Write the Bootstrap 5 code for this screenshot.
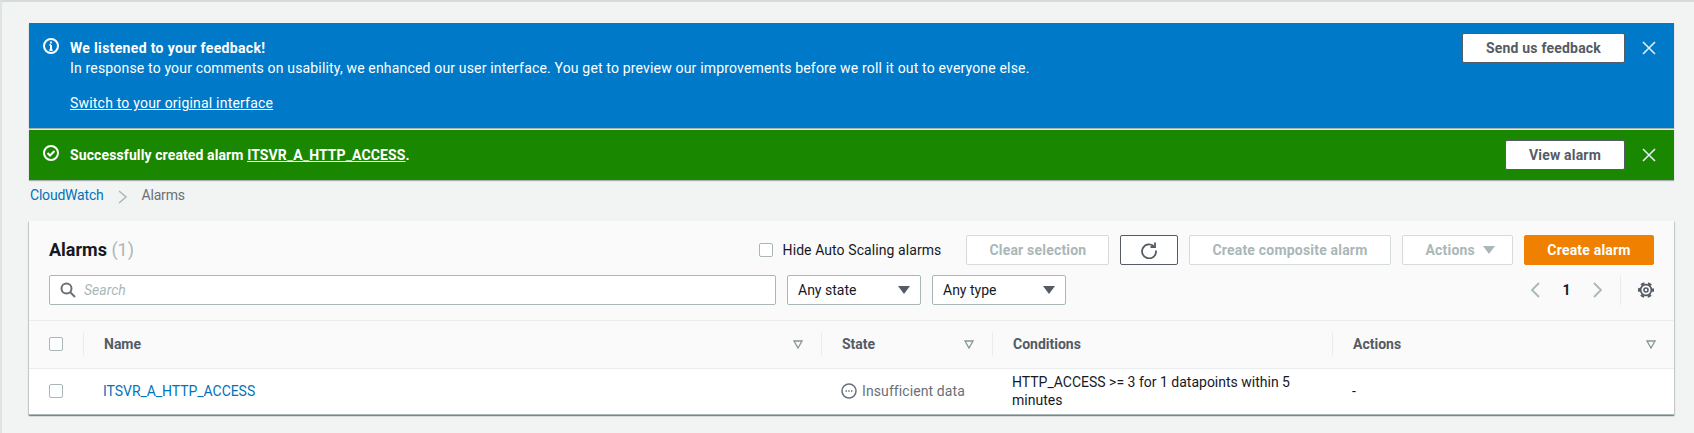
<!DOCTYPE html>
<html lang="en">
<head>
  <meta charset="UTF-8" />
  <title>CloudWatch Alarms</title>
  <link rel="stylesheet" href="https://cdn.jsdelivr.net/npm/bootstrap@5.3.0/dist/css/bootstrap.min.css" />
  <style>
    html, body { height: 100%; }
    body {
      background: #f2f3f3;
      border-top: 2px solid #d5dbdb;
      border-left: 2px solid #dfe3e3;
      font-family: Roboto, "Liberation Sans", sans-serif;
      font-size: 14px;
      line-height: 20px;
      color: #16191f;
      overflow: hidden;
    }
    .page-wrap { padding: 21px 20px 0 27px; }
    .flash-box { color: #fff; box-shadow: 0 1px 1px rgba(0, 28, 36, .3); display: flex; }
    .flash-info { background: #0079c8; height: 105px; margin-bottom: 2px; padding: 10px 18px 0 14px; }
    .flash-ok { background: #1a8700; height: 50px; padding: 10px 18px 0 14px; }
    .flash-box svg.status { flex: none; margin: 5px 11px 0 0; }
    .flash-text { flex: 1; padding-top: 5px; }
    .flash-text a { color: #fff; }
    .flash-text strong { letter-spacing: .33px; }
    .flash-text p { margin: 0 0 15px; letter-spacing: .17px; }
    .flash-link { letter-spacing: .2px; }
    .flash-ok .flash-text { letter-spacing: .11px; }
    .flash-btn {
      background: #fff;
      color: #545b64;
      border: 1px solid #545b64;
      border-radius: 2px;
      font-weight: 700;
      height: 30px;
      padding: 0 23px;
      line-height: 27px;
      letter-spacing: .2px;
    }
    .flash-close { margin: 7px 0 0 17px; flex: none; background: none; border: 0; padding: 0; line-height: 0; height: 16px; }
    .crumbs { height: 41px; padding-top: 5px; color: #687078; letter-spacing: -.2px; }
    .crumbs a { color: #0073bb; text-decoration: none; margin-left: 1px; }
    .crumbs svg { margin: 0 14px; }
    .alarm-card { box-shadow: 0 1px 1px 0 rgba(0, 28, 36, .3), 1px 1px 1px 0 rgba(0, 28, 36, .15), -1px 1px 1px 0 rgba(0, 28, 36, .15); background: #fff; }
    .alarm-head { background: #fafafa; height: 100px; padding: 14px 20px 0; border-bottom: 1px solid #eaeded; }
    .alarm-title { font-size: 18px; font-weight: 700; line-height: 30px; }
    .alarm-title span { color: #aab7b8; font-weight: 400; }
    .fake-check { width: 14px; height: 14px; border: 1px solid #aab7b8; border-radius: 2px; background: #fff; display: inline-block; flex: none; }
    .hide-label { margin: 0 25px 0 10px; letter-spacing: .08px; }
    .tool-gap { gap: 11px; }
    .aws-btn {
      height: 30px;
      border: 1px solid #d5dbdb;
      border-radius: 2px;
      background: #fff;
      color: #aab7b8;
      font-weight: 700;
      padding: 0 22px;
      line-height: 27px;
      letter-spacing: .2px;
    }
    .aws-refresh { border-color: #545b64; width: 58px; padding: 0; line-height: 0; }
    .aws-actions { padding: 0 17px 0 23px; }
    .aws-primary { background: #f08000; border-color: #f08000; color: #fff; width: 130px; padding: 0; }
    .tri { width: 0; height: 0; border-left: 6px solid transparent; border-right: 6px solid transparent; border-top: 8px solid #aab7b8; display: inline-block; }
    .search-row { margin-top: 10px; }
    .search-box { width: 727px; height: 30px; border: 1px solid #aab7b8; border-radius: 2px; background: #fff; padding: 0 10px; color: #aab7b8; font-style: italic; }
    .pick-box { width: 134px; height: 30px; border: 1px solid #aab7b8; border-radius: 2px; background: #fff; padding: 0 10px; }
    .pick-box .tri { border-top-color: #545b64; }
    .pager-num { font-weight: 700; width: 51px; text-align: center; }
    .pager-sep { border-left: 1px solid #eaeded; height: 30px; margin: 0 17px 0 16px; }
    .alarm-table { table-layout: fixed; margin: 0; }
    .alarm-table th { background: #fafafa; height: 47px; padding: 0; color: #545b64; font-weight: 700; vertical-align: middle; border-bottom: 1px solid #eaeded; }
    .alarm-table td { height: 46px; padding: 0; vertical-align: middle; border-bottom: 1px solid #aab7b8; box-shadow: none; color: #16191f; }
    .cell-head { display: flex; align-items: center; justify-content: space-between; height: 24px; border-left: 1px solid #eaeded; padding: 0 18px 0 20px; }
    .cell-first { padding-left: 20px; }
    .filter-tri { flex: none; }
    .alarm-link { color: #0073bb; text-decoration: none; padding-left: 20px; letter-spacing: -.05px; }
    .state-grey { color: #687078; padding-left: 20px; display: flex; align-items: center; gap: 5px; letter-spacing: .1px; }
    .cond-text { padding-left: 20px; padding-right: 10px; line-height: 18px; }
    .dash-cell { padding-left: 20px; }
  </style>
</head>
<body>
  <div class="page-wrap">
    <div class="flash-box flash-info">
      <svg class="status" width="16" height="16" viewBox="0 0 16 16" fill="none" stroke="#fff" stroke-width="2"><circle cx="8" cy="8" r="7"/><path d="M8 7v5M6.500 12h3M6.500 7H8"/><path d="M8 3.600v2" stroke-width="1.800"/></svg>
      <div class="flash-text">
        <strong>We listened to your feedback!</strong>
        <p>In response to your comments on usability, we enhanced our user interface. You get to preview our improvements before we roll it out to everyone else.</p>
        <a class="flash-link" href="#">Switch to your original interface</a>
      </div>
      <button class="flash-btn">Send us feedback</button>
      <button class="flash-close"><svg width="14" height="14" viewBox="0 0 14 14" stroke="#e4eef3" stroke-width="1.600"><path d="M1 1l12 12M13 1L1 13"/></svg></button>
    </div>
    <div class="flash-box flash-ok">
      <svg class="status" width="16" height="16" viewBox="0 0 16 16" fill="none" stroke="#fff" stroke-width="2"><circle cx="8" cy="8" r="7"/><path d="M4.500 8l2.500 2.500 4.500-4.500"/></svg>
      <div class="flash-text fw-bold">Successfully created alarm <a href="#">ITSVR_A_HTTP_ACCESS</a>.</div>
      <button class="flash-btn">View alarm</button>
      <button class="flash-close"><svg width="14" height="14" viewBox="0 0 14 14" stroke="#e4eef3" stroke-width="1.600"><path d="M1 1l12 12M13 1L1 13"/></svg></button>
    </div>

    <div class="crumbs d-flex align-items-start">
      <a href="#">CloudWatch</a>
      <svg width="10" height="16" viewBox="0 0 10 16" fill="none" stroke="#aab7b8" stroke-width="1.500" class="mt-1"><path d="M1 2l7 6-7 6"/></svg>
      <span>Alarms</span>
    </div>

    <div class="alarm-card">
      <div class="alarm-head">
        <div class="d-flex align-items-center tool-gap">
          <div class="alarm-title flex-grow-1">Alarms <span>(1)</span></div>
          <div class="d-flex align-items-center">
            <span class="fake-check"></span>
            <span class="hide-label">Hide Auto Scaling alarms</span>
            <button class="aws-btn">Clear selection</button>
          </div>
          <button class="aws-btn aws-refresh"><svg width="18" height="18" viewBox="0 0 18 18" fill="none" stroke="#545b64" stroke-width="1.800"><path d="M14.500 6A7 7 0 1 0 16 9.500"/><path d="M15 1.500V6h-4.500"/></svg></button>
          <button class="aws-btn">Create composite alarm</button>
          <button class="aws-btn aws-actions d-flex align-items-center gap-2">Actions <span class="tri"></span></button>
          <button class="aws-btn aws-primary">Create alarm</button>
        </div>
        <div class="d-flex align-items-center search-row tool-gap">
          <div class="search-box d-flex align-items-center gap-2">
            <svg width="16" height="16" viewBox="0 0 16 16" fill="none" stroke="#687078" stroke-width="2"><circle cx="6.500" cy="6.500" r="5"/><path d="M10 10l5 5"/></svg>
            <span>Search</span>
          </div>
          <div class="pick-box d-flex align-items-center justify-content-between"><span>Any state</span><span class="tri"></span></div>
          <div class="pick-box d-flex align-items-center justify-content-between"><span>Any type</span><span class="tri"></span></div>
          <div class="d-flex align-items-center ms-auto">
            <svg width="12" height="18" viewBox="0 0 12 18" fill="none" stroke="#aab7b8" stroke-width="1.800"><path d="M10 2L3 9l7 7"/></svg>
            <span class="pager-num">1</span>
            <svg width="12" height="18" viewBox="0 0 12 18" fill="none" stroke="#aab7b8" stroke-width="1.800"><path d="M2 2l7 7-7 7"/></svg>
            <span class="pager-sep"></span>
            <svg width="16" height="16" viewBox="0 0 16 16" fill="none" stroke="#545b64"><circle cx="8" cy="8" r="2" stroke-width="1.600"/><circle cx="8" cy="8" r="5.400" stroke-width="1.700"/><circle cx="8" cy="8" r="7" stroke-width="2" stroke-dasharray="3.800 3.530" stroke-dashoffset="1.900"/></svg>
          </div>
        </div>
      </div>

      <table class="table alarm-table">
        <colgroup><col style="width:54px"><col style="width:738px"><col style="width:171px"><col style="width:340px"><col></colgroup>
        <thead>
          <tr>
            <th><div class="cell-first d-flex"><span class="fake-check"></span></div></th>
            <th><div class="cell-head"><span>Name</span><svg class="filter-tri" width="10" height="9" viewBox="0 0 10 9" fill="none" stroke="#879596" stroke-width="1.300"><path d="M1 1h8L5 8z"/></svg></div></th>
            <th><div class="cell-head"><span>State</span><svg class="filter-tri" width="10" height="9" viewBox="0 0 10 9" fill="none" stroke="#879596" stroke-width="1.300"><path d="M1 1h8L5 8z"/></svg></div></th>
            <th><div class="cell-head"><span>Conditions</span></div></th>
            <th><div class="cell-head"><span>Actions</span><svg class="filter-tri" width="10" height="9" viewBox="0 0 10 9" fill="none" stroke="#879596" stroke-width="1.300"><path d="M1 1h8L5 8z"/></svg></div></th>
          </tr>
        </thead>
        <tbody>
          <tr>
            <td><div class="cell-first d-flex"><span class="fake-check"></span></div></td>
            <td><a class="alarm-link" href="#">ITSVR_A_HTTP_ACCESS</a></td>
            <td><div class="state-grey"><svg width="16" height="16" viewBox="0 0 16 16" fill="none" stroke="#687078" stroke-width="1.500"><circle cx="8" cy="8" r="7"/><path d="M4.700 8h1.100M7.450 8h1.100M10.200 8h1.100" stroke-width="1.800"/></svg>Insufficient data</div></td>
            <td><div class="cond-text">HTTP_ACCESS &gt;= 3 for 1 datapoints within 5 minutes</div></td>
            <td><span class="dash-cell">-</span></td>
          </tr>
        </tbody>
      </table>
    </div>
  </div>
</body>
</html>
